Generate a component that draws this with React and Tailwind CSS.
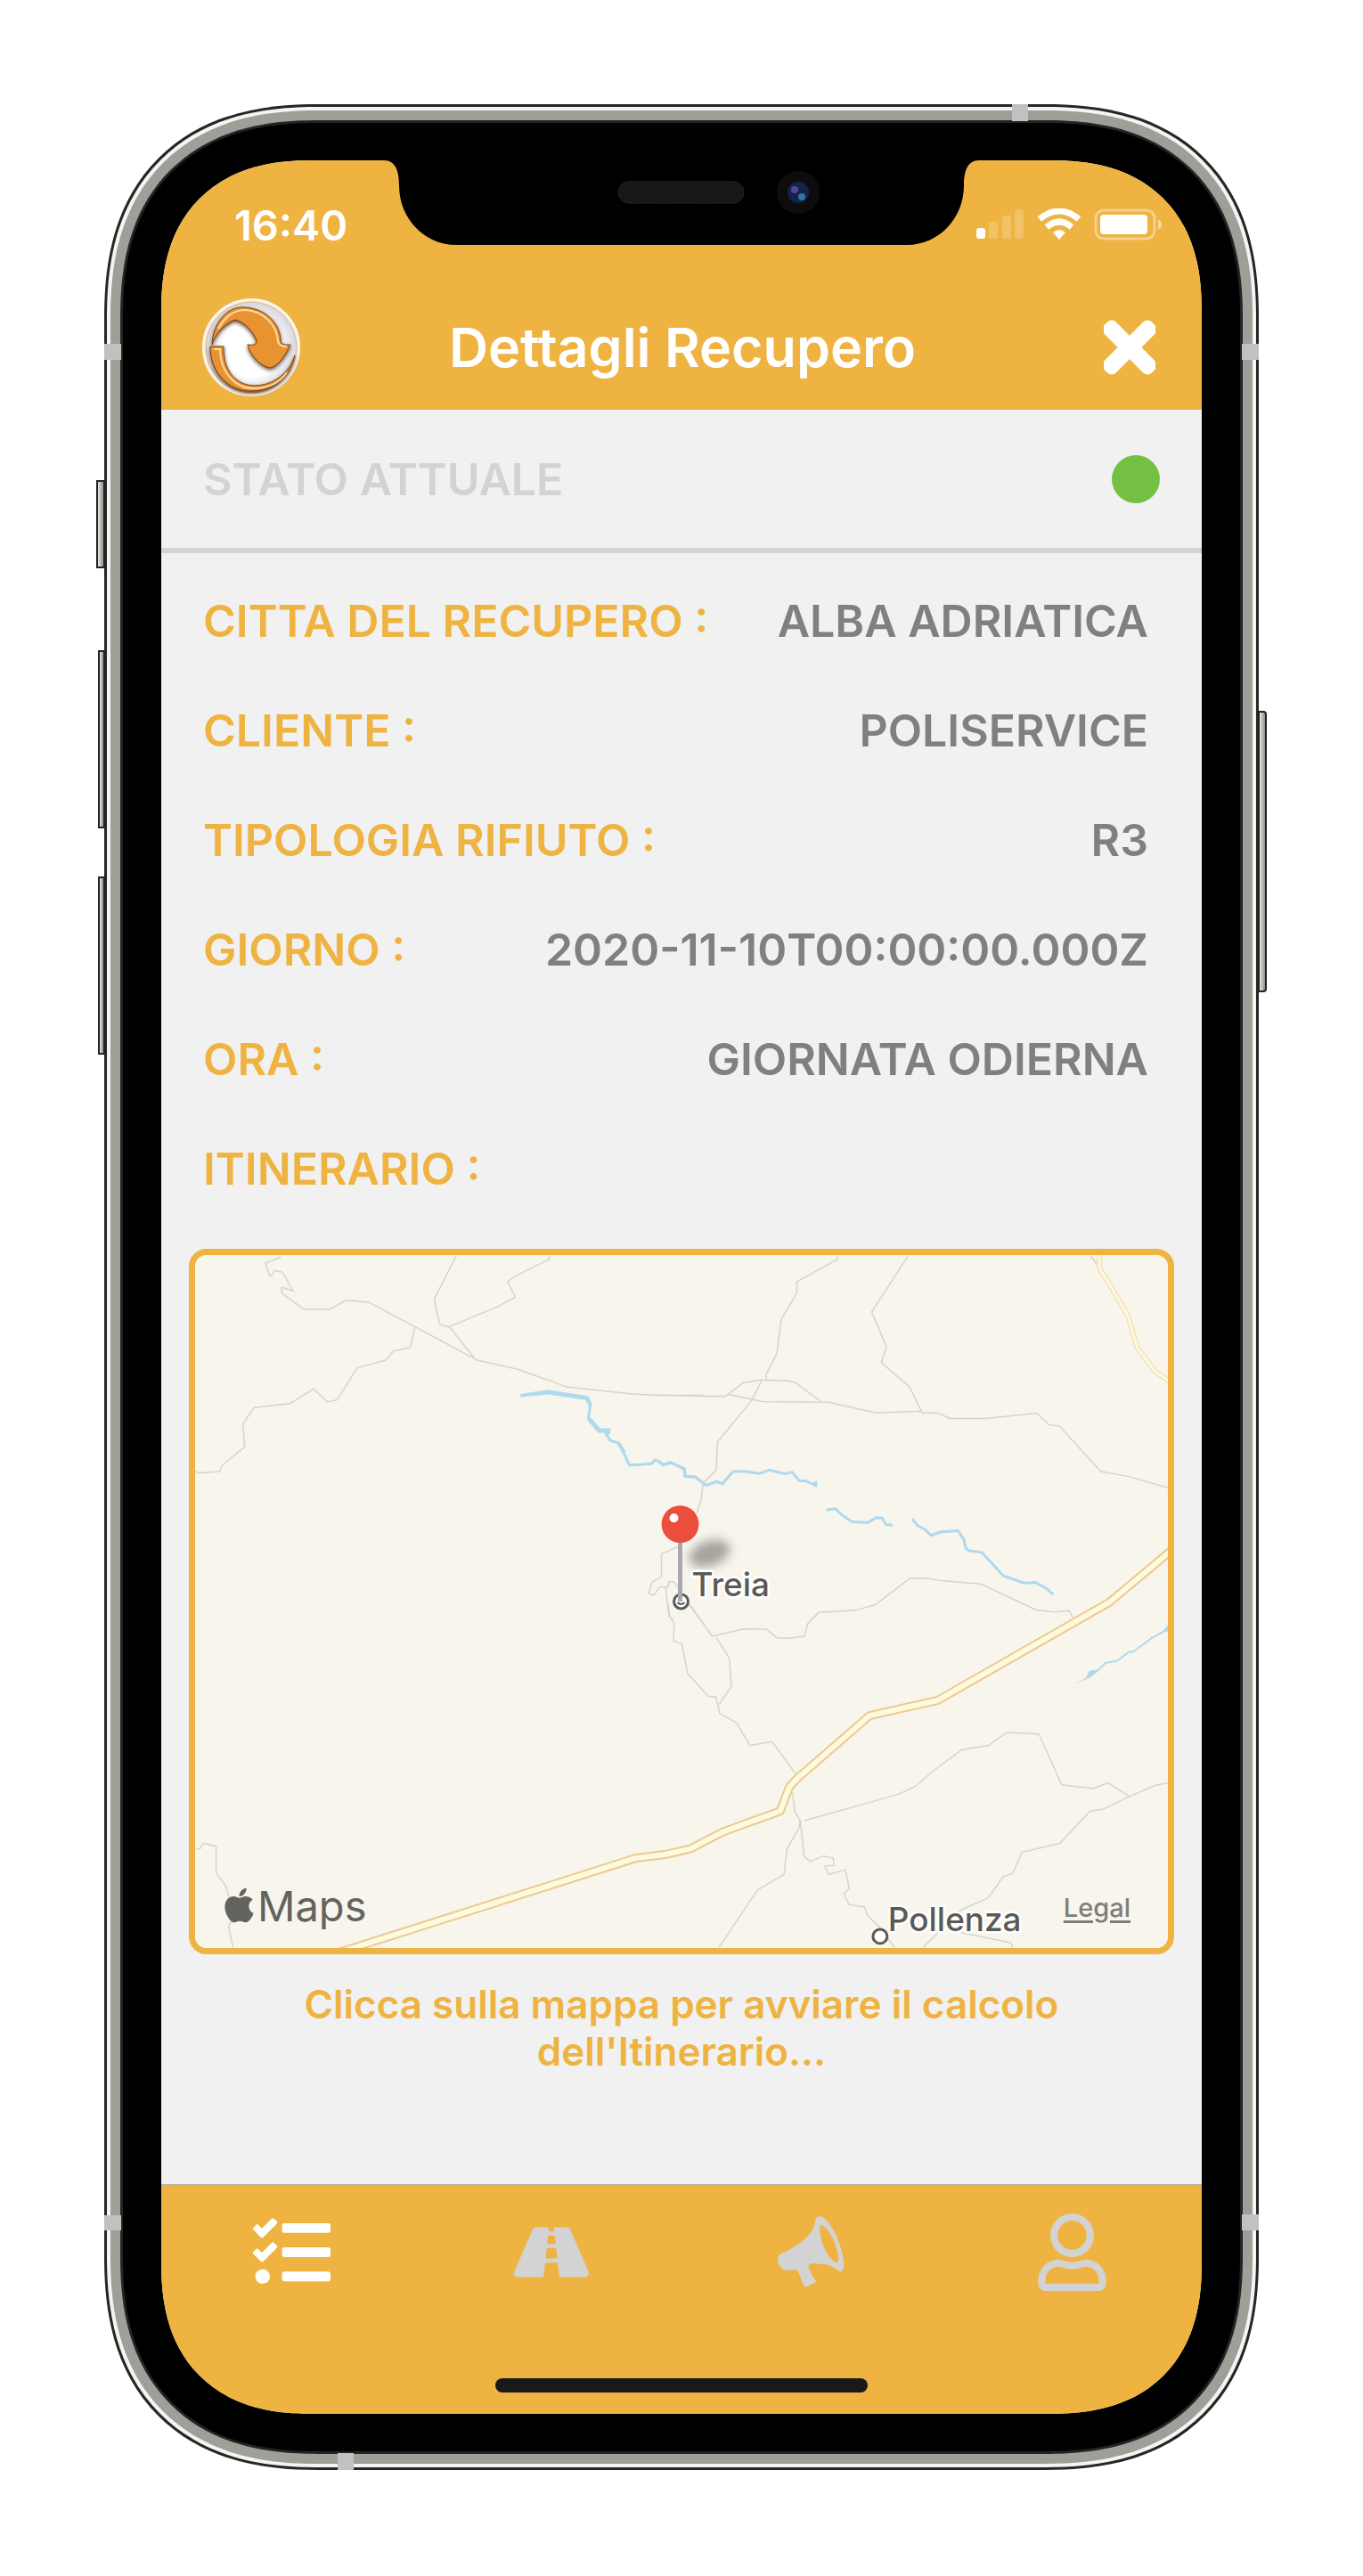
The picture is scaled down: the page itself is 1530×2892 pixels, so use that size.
import React from "react";
import { FaApple, FaRegUser, FaRoad, FaTasks, FaTimes } from "react-icons/fa";

const details = [
  { label: "CITTA DEL RECUPERO :", value: "ALBA ADRIATICA" },
  { label: "CLIENTE :", value: "POLISERVICE" },
  { label: "TIPOLOGIA RIFIUTO :", value: "R3" },
  { label: "GIORNO :", value: "2020-11-10T00:00:00.000Z" },
  { label: "ORA :", value: "GIORNATA ODIERNA" },
  { label: "ITINERARIO :", value: "" },
];

/* Map geometry, split in tiles; each tile has its own coordinate grid. */
const tiles = [
  {
    id: "nw",
    transform: "translate(-28 -29) scale(0.3827 0.3333)",
    roads: [
      "M323 88L322 96L280 114L292 157H297L306 139L330 145L362 209L328 196V215L393 270H469L520 239L585 247L905 443L1022 473L1165 532L1360 556L1442 561H1568",
      "M720 331L706 399L657 411L633 443L550 468L491 576L462 583L422 539L352 589L246 602L214 658L219 735L153 797L146 818L85 823L75 817",
      "M842 88L777 235L784 280L794 323L821 329L895 436",
      "M821 329L962 262L1015 229L992 177L1015 158L1115 101V88",
      "M1500 1070L1445 1096V1173L1417 1193L1407 1230L1422 1237L1440 1208L1463 1210L1467 1190L1483 1192L1494 1212L1526 1268L1562 1322",
      "M1457 1210L1467 1305L1478 1322",
    ],
    rivers: [
      { d: "M1236 587L1230 640L1262 680L1290 688L1282 692L1295 714L1320 722L1338 765L1350 797L1415 792L1427 778L1450 795L1470 787L1512 810L1515 835L1545 836L1568 858", w: 3 },
      { d: "M1232 640L1262 680H1295", w: 5 },
      { d: "M1318 722L1336 755", w: 4 },
    ],
    lakes: ["M1030 556L1110 542L1230 563L1240 587L1232 600L1222 577L1110 558L1030 567Z"],
  },
  {
    id: "ne",
    transform: "translate(522 -29) scale(0.3827 0.3333)",
    roads: [
      "M0 560L130 564H195L205 556L247 519L300 509L380 511L400 517L475 580",
      "M205 558L305 582L500 584L640 620L772 614L775 620H820L856 639H960L1112 621L1147 660L1178 665L1300 818L1382 835L1497 873",
      "M526 88V101L406 177V215L360 305L347 420L316 490V508",
      "M303 510L272 580L173 717L168 814L130 857L124 915L111 960",
      "M733 90L626 279L670 398L654 450L737 532L772 614",
      "M1270 88L1296 132",
      "M448 1320L470 1294L578 1287L637 1268L738 1179H790L830 1187L947 1198L1110 1286L1165 1293L1207 1288L1218 1312",
    ],
    rivers: [
      { d: "M0 783L12 797L35 788L75 808L77 835L107 837L140 865L170 852L187 860L218 818L255 818L295 825L325 813L370 826L392 820L413 850H432L458 864", w: 3 },
      { d: "M492 948L520 944L535 962L568 988L615 990L640 974L657 975L668 997L688 999", w: 3 },
      { d: "M745 978L762 1002L782 1013L800 1034L830 1022L880 1018L897 1048L903 1078L912 1086L950 1091L1013 1170L1075 1195L1108 1193L1138 1212L1160 1234", w: 3 },
    ],
    lakes: ["M445 860L465 850V874Z"],
  },
  {
    id: "sw",
    transform: "translate(-28 391) scale(0.3827 0.3571)",
    roads: ["M75 777L88 776L97 759L135 769V852L163 894L190 990L171 1020L185 1088"],
    rivers: [],
    lakes: [],
  },
  {
    id: "se",
    transform: "translate(522 391) scale(0.3827 0.3571)",
    roads: [
      "M92 8L157 107L250 84L317 85L348 112L383 113L428 107L438 67L470 32",
      "M168 110L207 175L213 266L177 322",
      "M28 5L31 42L45 65L43 121L68 132L85 225L145 296L168 298L179 350L228 379L268 451L333 439L402 540",
      "M393 600L400 660L416 688L427 800L445 817L483 800L513 806L515 829L488 831L500 858L549 843L560 902L544 920L560 953L604 960L615 989L655 1030L693 1088",
      "M416 688L411 714L377 777L368 858L290 907L177 1088",
      "M428 688L705 605L755 580L805 533L892 464L970 451L1023 410L1118 415L1185 575L1277 587L1322 569L1384 612L1460 577L1497 569",
      "M1384 612L1307 652L1268 658L1180 759L1068 788L1041 854L1013 865L968 932L890 969L777 1088",
      "M850 1028L890 1041L1035 1073L1042 1088",
    ],
    rivers: [{ d: "M1260 235L1290 216L1313 191L1347 185L1383 156H1395L1450 112L1497 85", w: 2 }],
    lakes: ["M1222 259L1256 238L1266 216L1298 211L1270 236Z", "M1480 92L1500 68V92Z"],
  },
];

const highwaySouth =
  "M1510 -166L1325 0L820 309L620 357L408 554L384 582L357 658L190 723L92 777L18 795L-67 806L-727 1031L-960 1110";
const highwayNorth = "M1296 70V132L1333 200L1380 292L1407 400L1460 481L1510 520";

function Highway({ d, transform, outer, inner, edge }) {
  return (
    <g transform={transform} fill="none" strokeLinejoin="round">
      <path d={d} stroke={edge} strokeWidth={outer} vectorEffect="non-scaling-stroke" />
      <path d={d} stroke="#fcfbdc" strokeWidth={inner} vectorEffect="non-scaling-stroke" />
    </g>
  );
}

function MapDrawing() {
  return (
    <svg viewBox="0 0 1095 780" className="block h-auto w-full bg-[#f8f5ec]" aria-hidden="true">
      <defs>
        <filter id="soft" x="-60%" y="-80%" width="220%" height="260%">
          <feGaussianBlur stdDeviation="6" />
        </filter>
      </defs>
      {tiles.map((tile) => (
        <g key={tile.id} transform={tile.transform} fill="none" strokeLinejoin="round">
          {tile.roads.map((d) => (
            <path key={d} d={d} stroke="#d6d4cd" strokeWidth="1.5" vectorEffect="non-scaling-stroke" />
          ))}
          {tile.rivers.map(({ d, w }) => (
            <path key={d} d={d} stroke="#addaee" strokeWidth={w} vectorEffect="non-scaling-stroke" />
          ))}
          {tile.lakes.map((d) => (
            <path key={d} d={d} fill="#addaee" />
          ))}
        </g>
      ))}
      <Highway d={highwayNorth} transform={tiles[1].transform} outer="6" inner="3" edge="#f3dfc2" />
      <Highway d={highwaySouth} transform={tiles[3].transform} outer="10" inner="6" edge="#efc795" />

      <ellipse cx="579" cy="336" rx="24" ry="14" fill="#8f8e88" opacity="0.8" transform="rotate(-20 579 336)" filter="url(#soft)" />
      <circle cx="547" cy="390" r="8" fill="#fff" stroke="#5a5a55" strokeWidth="3" />
      <path d="M543 391Q547 395 551 391" fill="none" stroke="#5a5a55" strokeWidth="2" />
      <path d="M546 320V390" stroke="#a8a9ab" strokeWidth="5" />
      <circle cx="546" cy="303" r="21" fill="#eb4e3d" />
      <circle cx="539" cy="296" r="5" fill="#fff" />
      <circle cx="771" cy="767" r="8" fill="#fff" stroke="#5a5a55" strokeWidth="3" />
      <g fill="#5a5a55" stroke="#fff" strokeWidth="5" strokeLinejoin="round" paintOrder="stroke" fontSize="37" fontWeight="500">
        <text x="559" y="384">Treia</text>
        <text x="780" y="761">Pollenza</text>
      </g>
    </svg>
  );
}

function RecycleLogo() {
  return (
    <svg viewBox="0 0 110 110" className="size-[110px]" role="img" aria-label="Logo">
      <defs>
        <radialGradient id="disc" cx="0.5" cy="0.5" r="0.5">
          <stop offset="0.6" stopColor="#ffffff" />
          <stop offset="0.92" stopColor="#d9d9df" />
          <stop offset="1" stopColor="#ffffff" />
        </radialGradient>
        <filter id="drop" x="-20%" y="-20%" width="140%" height="140%">
          <feDropShadow dx="0" dy="2" stdDeviation="2" floodColor="#3a1d00" floodOpacity="0.8" />
        </filter>
      </defs>
      <circle cx="55" cy="55" r="54" fill="url(#disc)" stroke="#faf6ee" strokeWidth="2" />
      <circle cx="55" cy="55" r="51" fill="none" stroke="#e9b370" strokeWidth="1" />
      <g fill="#e99232" stroke="#7a3f08" strokeWidth="1" strokeLinejoin="round" filter="url(#drop)">
        <path d="M9 54H24C23 78 35 97 58 98C80 98 98 84 104 64C99 88 80 104 55 104C28 104 9 82 9 54Z" />
        <path d="M11 52C12 30 26 9 47 10C72 11 88 29 88 48Q88 53 99 52C94 63 86 76 76 78C66 76 54 65 51 52Q62 54 61 47C56 36 48 27 37 24C27 27 15 38 11 52Z" />
      </g>
      <path d="M18 34C27 18 38 13 48 13C69 14 84 30 85 48Q86 54 95 54M13 57H20C20 82 36 101 58 101C72 101 86 96 95 83" fill="none" stroke="#fbd9a0" strokeWidth="2" />
    </svg>
  );
}

function StatusIcons() {
  return (
    <svg viewBox="0 0 208 36" className="h-9 w-[208px]" role="img" aria-label="Segnale, Wi-Fi e batteria" fill="#fff">
      <rect x="0" y="22" width="10" height="12" rx="3" />
      <g opacity="0.2">
        <rect x="14" y="15" width="10" height="19" rx="3" />
        <rect x="29" y="8" width="10" height="26" rx="3" />
        <rect x="43" y="1" width="10" height="33" rx="3" />
      </g>
      <g fill="none" stroke="#fff" strokeWidth="7">
        <path d="M71 12Q93 -6 115 12" />
        <path d="M79 21Q93 9 107 21" />
      </g>
      <path d="M93 35L86 27Q93 21 100 27Z" />
      <rect x="134" y="2" width="66" height="32" rx="9" fill="none" stroke="#fff" strokeOpacity="0.4" strokeWidth="3" />
      <rect x="139" y="7" width="53" height="22" rx="4" />
      <path d="M204 12Q208 14 208 18T204 24Z" opacity="0.5" />
    </svg>
  );
}

function Notch() {
  return (
    <svg viewBox="0 0 668 95" className="absolute top-0 left-1/2 w-[668px] -translate-x-1/2" aria-hidden="true">
      <defs>
        <pattern id="mesh" width="4" height="4" patternUnits="userSpaceOnUse">
          <rect width="4" height="4" fill="#1c1c1c" />
          <rect width="2" height="2" fill="#121212" />
          <rect x="2" y="2" width="2" height="2" fill="#121212" />
        </pattern>
      </defs>
      <path d="M0 0C13 0 17 12 17 28C17 66 46 95 81 95H587C622 95 651 66 651 28C651 12 655 0 668 0Z" fill="#000" />
      <rect x="263" y="24" width="141" height="24" rx="12" fill="url(#mesh)" stroke="#262626" strokeWidth="1" />
      <circle cx="465" cy="36" r="24" fill="#0d0d0d" />
      <circle cx="465" cy="36" r="12" fill="#12244a" />
      <circle cx="461" cy="33" r="4" fill="#5a4390" />
      <circle cx="469" cy="41" r="4" fill="#3273a0" />
    </svg>
  );
}

function Megaphone() {
  return (
    <svg viewBox="0 0 76 80" className="h-20 w-[76px]" fill="currentColor" aria-hidden="true">
      <path
        fillRule="evenodd"
        d="M47 0C56 2 64 16 69 30C74 45 77 60 71 62C66 62 62 54 50 54L39 53Q33 54 35 58Q38 68 43 72Q44 74 41 75L33 79Q30 80 29 77L24 65Q22 60 18 60Q14 61 10 61C4 60 0 54 0 48Q0 44 4 42C18 36 28 29 35 21C42 13 41 8 43 2Q45 0 47 0ZM48 10C44 20 56 52 67 52C72 46 60 12 48 10Z"
      />
    </svg>
  );
}

const tabs = [
  { name: "Attività", active: true, icon: <FaTasks size={87} /> },
  { name: "Percorsi", icon: <FaRoad size={75} className="w-[84px]" /> },
  { name: "Avvisi", icon: <Megaphone /> },
  { name: "Profilo", icon: <FaRegUser size={87} /> },
];

function DeviceHardware() {
  const key = "absolute border-2 border-[#222] bg-linear-to-r from-[#e8e8e4] to-[#8d908a]";
  const band = "absolute bg-[#bfc2be]";
  return (
    <div aria-hidden="true">
      <span className={`${key} top-[422px] -left-[9px] h-[99px] w-[10px]`} />
      <span className={`${key} top-[613px] -left-[7px] h-[200px] w-2`} />
      <span className={`${key} top-[867px] -left-[7px] h-[200px] w-2`} />
      <span className={`${key} top-[681px] -right-[9px] h-[316px] w-[10px] rounded-r-sm`} />
      <span className={`${band} top-[269px] left-0 h-[18px] w-[19px]`} />
      <span className={`${band} top-[269px] right-0 h-[18px] w-[19px]`} />
      <span className={`${band} bottom-[269px] left-0 h-[17px] w-[19px]`} />
      <span className={`${band} right-0 bottom-[269px] h-[18px] w-[19px]`} />
      <span className={`${band} top-0 right-[259px] h-[19px] w-[18px]`} />
      <span className={`${band} bottom-0 left-[262px] h-[19px] w-[18px]`} />
    </div>
  );
}

export default function App() {
  return (
    <div className="flex justify-center bg-white p-[117px] font-['Inter',sans-serif]">
      <div className="relative w-full max-w-[1296px] rounded-[240px] bg-[#262626] p-[3px] [corner-shape:superellipse(1.25)]">
        <div className="rounded-[237px] bg-[#f4f4f2] p-1 [corner-shape:superellipse(1.25)]">
          <div className="rounded-[233px] bg-[#9da098] p-[11px] [corner-shape:superellipse(1.25)]">
            <div className="rounded-[222px] bg-[#242424] p-[3px] [corner-shape:superellipse(1.25)]">
              <div className="rounded-[218px] bg-black px-[43px] py-[42px] [corner-shape:superellipse(1.25)]">
                <main className="relative overflow-hidden rounded-[170px] bg-[#f1f1f1] [corner-shape:superellipse(1.25)]">
                  <header className="bg-[#eeb341] text-white">
                    <div className="flex h-36 items-center justify-between pr-[45px] pl-[82px]">
                      <span className="text-[47px] leading-none font-semibold">16:40</span>
                      <StatusIcons />
                    </div>
                    <div className="flex h-[136px] items-center justify-between pr-[52px] pb-1 pl-[46px]">
                      <RecycleLogo />
                      <h1 className="text-[61px] leading-none font-semibold">Dettagli Recupero</h1>
                      <button type="button" aria-label="Chiudi" className="flex w-[102px] justify-end">
                        <FaTimes size={84} className="w-[58px] stroke-white stroke-[20px]" />
                      </button>
                    </div>
                  </header>
                  <Notch />

                  <section className="flex h-[161px] items-center justify-between border-b-6 border-[#d3d3d3] pr-[47px] pl-[47px]">
                    <h2 className="text-[50px] leading-none font-semibold text-[#d3d3d3]">STATO ATTUALE</h2>
                    <span className="size-[54px] rounded-full bg-[#73c043]" role="img" aria-label="Attivo" />
                  </section>

                  <dl className="pt-[14px] pr-[60px] pb-px pl-[47px] text-[50px] leading-none font-semibold">
                    {details.map(({ label, value }) => (
                      <div key={label} className="flex h-[123px] items-center justify-between whitespace-nowrap">
                        <dt className="text-[#eeb341]">{label}</dt>
                        <dd className="text-[#808080]">{value}</dd>
                      </div>
                    ))}
                  </dl>

                  <section className="px-[31px] pt-7">
                    <div className="relative overflow-hidden rounded-[20px] border-7 border-[#eeb341]">
                      <button type="button" aria-label="Avvia il calcolo dell'itinerario" className="block w-full">
                        <MapDrawing />
                      </button>
                      <span className="pointer-events-none absolute bottom-6 left-[33px] flex items-center gap-1 text-[47px] leading-none text-[#63635f]">
                        <FaApple size={44} className="w-[33px]" />
                        Maps
                      </span>
                      <a href="#legal" className="absolute right-[42px] bottom-[31px] text-[29px] leading-none font-medium text-[#7f7e78] underline decoration-3 underline-offset-4">
                        Legal
                      </a>
                    </div>
                    <p className="px-[100px] pt-[30px] pb-[122px] text-center text-[44px] leading-[53px] font-semibold text-[#eeb341]">
                      Clicca sulla mappa per avviare il calcolo dell'Itinerario...
                    </p>
                  </section>

                  <nav className="border-t-2 border-[#b9b4a6] bg-[#eeb341] pb-6">
                    <div className="grid h-[149px] grid-cols-4">
                      {tabs.map(({ name, active, icon }) => (
                        <button
                          key={name}
                          type="button"
                          aria-label={name}
                          className={active ? "flex items-center justify-center text-white" : "flex items-center justify-center text-[#d3d3d3]"}
                        >
                          {icon}
                        </button>
                      ))}
                    </div>
                    <div className="mx-auto mt-[67px] h-4 w-[418px] rounded-full bg-[#191919]" />
                  </nav>
                </main>
              </div>
            </div>
          </div>
        </div>
        <DeviceHardware />
      </div>
    </div>
  );
}
